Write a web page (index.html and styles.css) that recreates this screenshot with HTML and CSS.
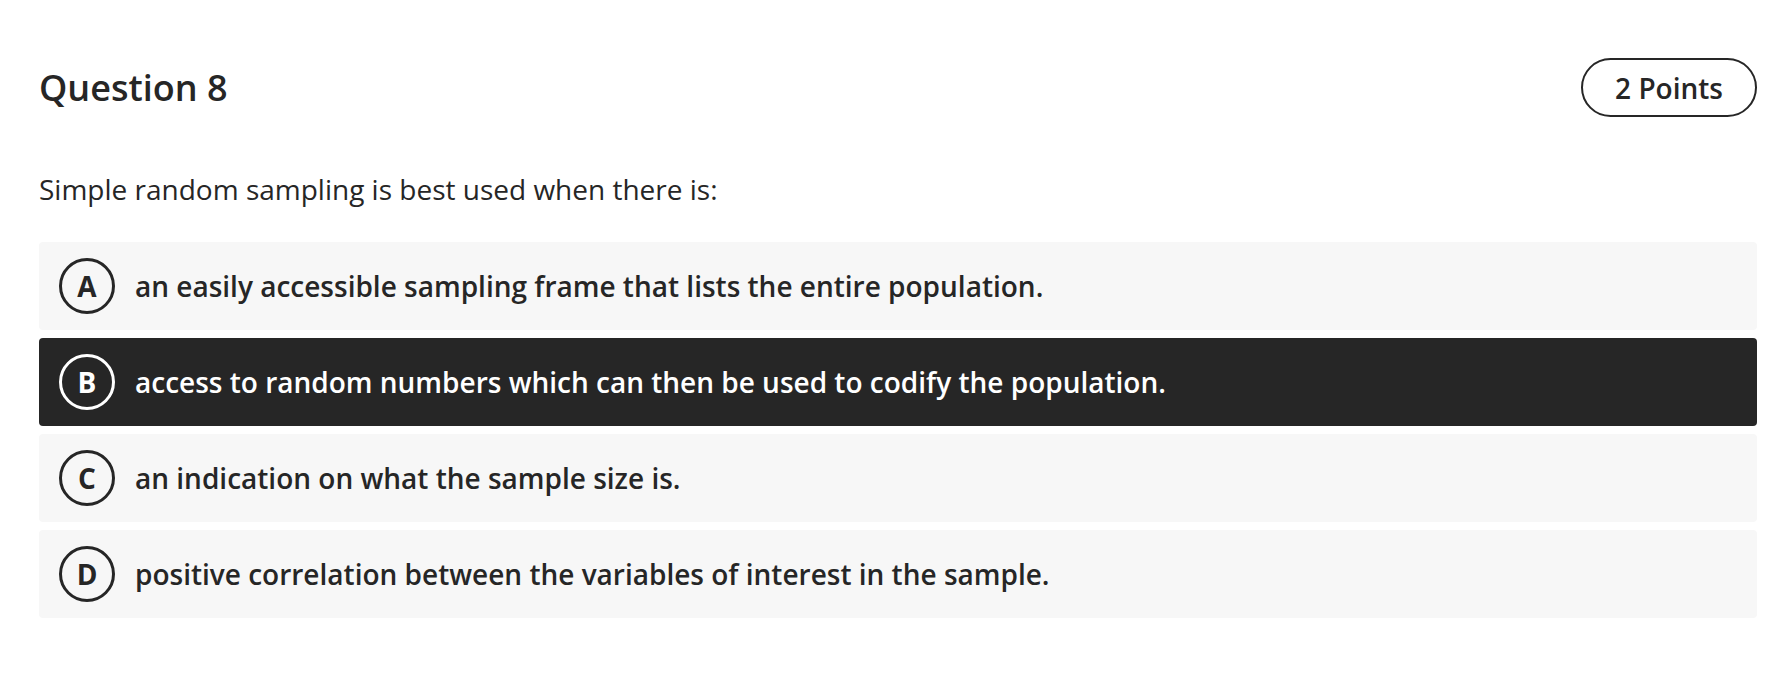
FILE: index.html
```html
<!DOCTYPE html>
<html lang="en">
<head>
<meta charset="utf-8">
<title>Question 8</title>
<link rel="stylesheet" href="styles.css">
</head>
<body>
<main class="question">
  <header class="q-head">
    <h1 class="q-title">Question 8</h1>
    <span class="q-points">2 Points</span>
  </header>
  <p class="q-text">Simple random sampling is best used when there is:</p>
  <ul class="options">
    <li class="option"><span class="letter">A</span><span class="opt-text">an easily accessible sampling frame that lists the entire population.</span></li>
    <li class="option selected"><span class="letter">B</span><span class="opt-text">access to random numbers which can then be used to codify the population.</span></li>
    <li class="option"><span class="letter">C</span><span class="opt-text">an indication on what the sample size is.</span></li>
    <li class="option"><span class="letter">D</span><span class="opt-text">positive correlation between the variables of interest in the sample.</span></li>
  </ul>
</main>
</body>
</html>
```

FILE: styles.css
```css
html, body {
  margin: 0;
  padding: 0;
  background: #ffffff;
}
body {
  font-family: "Open Sans", "Liberation Sans", sans-serif;
  color: #262626;
}
.question {
  padding: 58px 35px 0 39px;
}
.q-head {
  display: flex;
  justify-content: space-between;
  align-items: center;
  height: 59px;
}
.q-title {
  margin: 0;
  font-size: 36px;
  font-weight: 600;
  line-height: 1;
}
.q-points {
  box-sizing: border-box;
  height: 59px;
  padding: 0 32px;
  border: 2px solid #262626;
  border-radius: 30px;
  display: flex;
  align-items: center;
  font-size: 28px;
  font-weight: 600;
}
.q-text {
  margin: 0;
  padding-top: 52px;
  font-size: 28px;
  line-height: 40px;
  font-weight: 400;
}
.options {
  list-style: none;
  margin: 0;
  padding: 33px 0 0;
  display: flex;
  flex-direction: column;
  gap: 8px;
}
.option {
  height: 88px;
  box-sizing: border-box;
  display: flex;
  align-items: center;
  gap: 20px;
  padding: 0 20px;
  background: #f7f7f7;
  border-radius: 4px;
  font-size: 28px;
  font-weight: 600;
}
.letter {
  box-sizing: border-box;
  flex: 0 0 auto;
  width: 56px;
  height: 56px;
  border: 3px solid #262626;
  border-radius: 50%;
  display: flex;
  align-items: center;
  justify-content: center;
  font-size: 28px;
  font-weight: 700;
  line-height: 1;
}
.option.selected {
  background: #262626;
  color: #ffffff;
}
.option.selected .letter {
  border-color: #ffffff;
}
```
